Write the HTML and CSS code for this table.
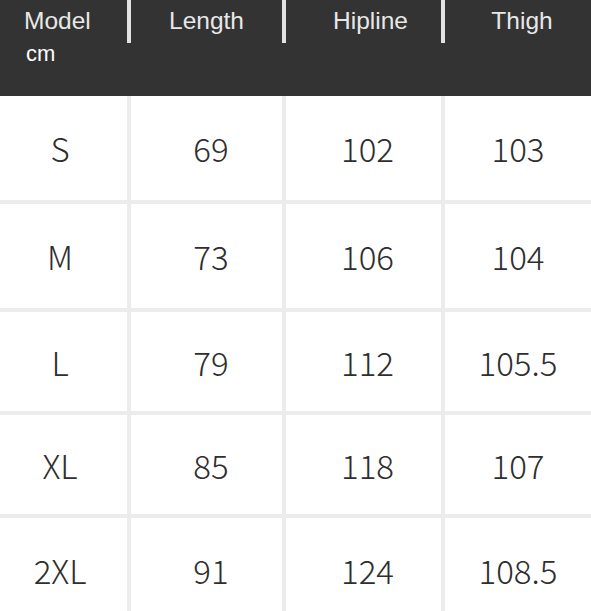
FILE: index.html
```html
<!DOCTYPE html>
<html>
<head>
<meta charset="utf-8">
<link rel="stylesheet" href="styles.css">
</head>
<body>
<div class="chart">
  <div class="head">
    <div class="hcell c1">Model</div>
    <div class="hcell c2">Length</div>
    <div class="hcell c3">Hipline</div>
    <div class="hcell c4 last">Thigh</div>
    <div class="unit">cm</div>
  </div>
  <div class="grid">
    <div class="cell">S</div><div class="cell">69</div><div class="cell">102</div><div class="cell">103</div>
    <div class="cell">M</div><div class="cell">73</div><div class="cell">106</div><div class="cell">104</div>
    <div class="cell">L</div><div class="cell">79</div><div class="cell">112</div><div class="cell">105.5</div>
    <div class="cell">XL</div><div class="cell">85</div><div class="cell">118</div><div class="cell">107</div>
    <div class="cell">2XL</div><div class="cell">91</div><div class="cell">124</div><div class="cell">108.5</div>
  </div>
</div>
</body>
</html>
```
FILE: styles.css
```css
html, body {
  margin: 0;
  padding: 0;
  background: #ffffff;
}
.chart {
  width: 591px;
  overflow: hidden;
}
.head {
  background: #333333;
  height: 96px;
  display: grid;
  grid-template-columns: 131px 155px 159px 146px;
  grid-template-rows: 43px 53px;
  font-family: "Liberation Sans", Arial, sans-serif;
}
.hcell {
  border-right: 4px solid #e2e2e2;
  color: #e8e8e8;
  font-size: 24.5px;
  line-height: 24px;
  padding-top: 9px;
  box-sizing: border-box;
  text-align: center;
}
.hcell.last {
  border-right: none;
}
.hcell.c1 {
  text-align: left;
  padding-left: 24px;
}
.hcell.c3 {
  padding-left: 14px;
}
.hcell.c4 {
  padding-left: 8px;
}
.unit {
  grid-column: 1 / 2;
  color: #ffffff;
  font-size: 22px;
  line-height: 22px;
  padding-left: 26px;
  padding-top: 0px;
}
.grid {
  display: grid;
  grid-template-columns: 127px 151px 155px 146px;
  grid-template-rows: 104px 104px 99px 99px 104px;
  column-gap: 4px;
  row-gap: 4px;
  background: #ececec;
}
.cell {
  background: #ffffff;
  display: flex;
  align-items: center;
  justify-content: center;
  font-family: "Noto Sans CJK SC", "Noto Sans", sans-serif;
  font-weight: 300;
  font-size: 33px;
  color: #2e2e2e;
}
.cell:nth-child(4n+1) {
  padding-right: 7px;
}
.cell:nth-child(4n+2) {
  padding-left: 9px;
}
.cell:nth-child(4n+3) {
  padding-left: 8px;
}
```
